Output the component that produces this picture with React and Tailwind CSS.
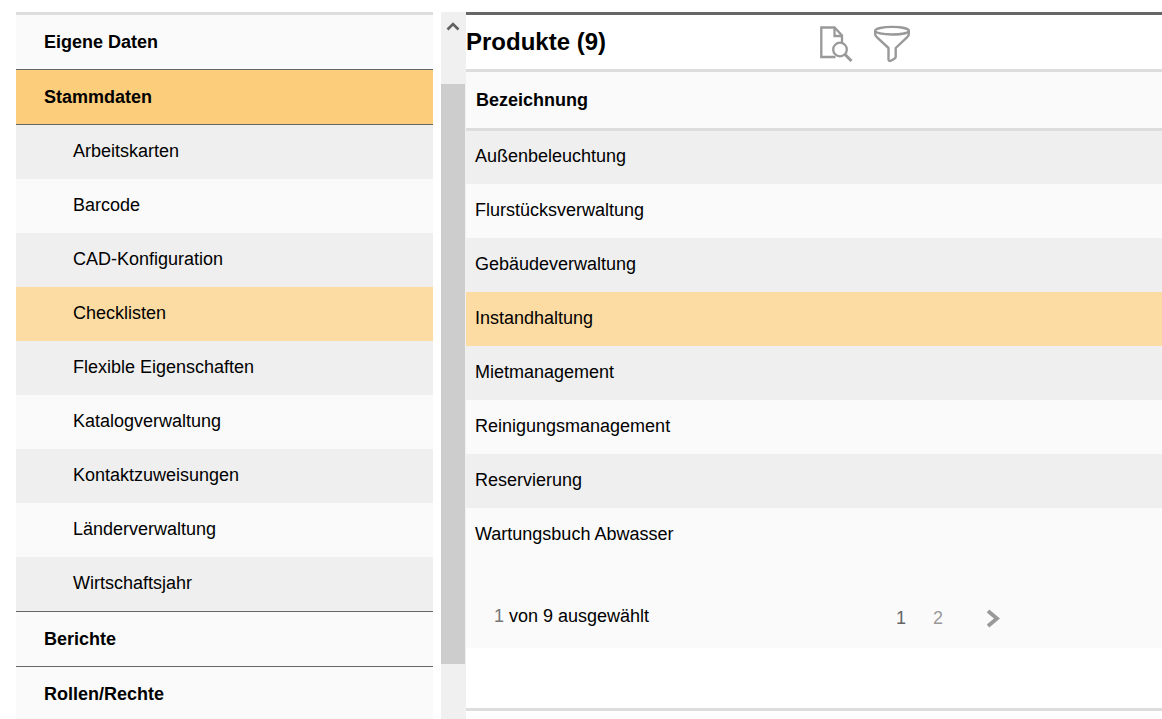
import { useState } from 'react';
import clsx from 'clsx';

const STAMMDATEN = [
  'Arbeitskarten', 'Barcode', 'CAD-Konfiguration', 'Checklisten', 'Flexible Eigenschaften',
  'Katalogverwaltung', 'Kontaktzuweisungen', 'Länderverwaltung', 'Wirtschaftsjahr',
];

const PRODUKTE = [
  'Außenbeleuchtung', 'Flurstücksverwaltung', 'Gebäudeverwaltung', 'Instandhaltung',
  'Mietmanagement', 'Reinigungsmanagement', 'Reservierung', 'Wartungsbuch Abwasser',
];

export default function App() {
  return (
    <div className="h-screen overflow-hidden pt-3 pl-4 flex bg-white text-black text-[18px] leading-6 font-['Liberation_Sans',Arial,sans-serif]">
      <Sidebar />
      <ScrollRail />
      <Products />
    </div>
  );
}

function Sidebar() {
  const [active, setActive] = useState('Checklisten');

  return (
    <nav className="w-[417px] shrink-0 border-t-3 border-[#dddddd]">
      <SectionLink label="Eigene Daten" />
      <SectionLink label="Stammdaten" open />
      <ul>
        {STAMMDATEN.map(item => (
          <li key={item} className={clsx(active === item ? 'bg-[#fddca3]' : 'odd:bg-[#efefef] even:bg-[#fafafa]')}>
            <a href="#" onClick={() => setActive(item)} className="flex items-center h-[54px] pl-[57px] pb-0.5">{item}</a>
          </li>
        ))}
      </ul>
      <div className="border-t border-[#666666]">
        <SectionLink label="Berichte" />
        <SectionLink label="Rollen/Rechte" />
      </div>
    </nav>
  );
}

function SectionLink({ label, open }) {
  return (
    <a href="#" className={clsx('flex items-center h-[55px] pl-7 border-b border-[#666666] font-bold', open ? 'bg-[#fccd7b]' : 'bg-[#fafafa]')}>
      {label}
    </a>
  );
}

function ScrollRail() {
  return (
    <div className="ml-2 w-[25px] shrink-0 bg-[#f0f0f0]">
      <button aria-label="Nach oben" className="w-6 h-[72px] flex justify-center items-start pt-2">
        <svg width="14" height="14" viewBox="0 0 14 14" fill="none" stroke="#606060" strokeWidth="2.6">
          <path d="M1.500 9.500 7 4l5.500 5.500" />
        </svg>
      </button>
      <div className="w-6 h-[580px] bg-[#cdcdcd]" />
    </div>
  );
}

function Products() {
  const [selected, setSelected] = useState('Instandhaltung');

  return (
    <main className="flex-1 min-w-0">
      <section className="border-t-3 border-[#666666]">
        <header className="h-[54px] flex items-center">
          <h1 className="w-[353px] text-2xl font-bold">Produkte (9)</h1>
          <div className="flex gap-5">
            <button aria-label="Vorschau"><PreviewIcon /></button>
            <button aria-label="Filter"><FilterIcon /></button>
          </div>
        </header>

        <table className="w-full border-collapse text-left">
          <thead>
            <tr className="h-[59px] bg-[#fafafa] border-y-3 border-[#dddddd]">
              <th className="py-0 px-2.5 font-bold">Bezeichnung</th>
            </tr>
          </thead>
          <tbody>
            {PRODUKTE.map(name => (
              <tr key={name} onClick={() => setSelected(name)}
                className={clsx('h-[54px]', selected === name ? 'bg-[#fddca3]' : 'odd:bg-[#efefef] even:bg-[#fafafa]')}>
                <td className="pt-0 pb-0.5 px-[9px]">{name}</td>
              </tr>
            ))}
          </tbody>
        </table>

        <footer className="h-[86px] flex items-start pt-[42px] pl-7 bg-[#fafafa]">
          <p className="w-[402px]"><span className="text-[#777777]">1</span> von 9 ausgewählt</p>
          <div className="flex items-center pt-0.5 text-[#999999]">
            <button className="w-[37px] text-left text-[#666666]">1</button>
            <button className="w-[53px] text-left">2</button>
            <button aria-label="Nächste Seite">
              <svg width="16" height="20" viewBox="0 0 16 20" fill="none" stroke="currentColor" strokeWidth="3.8">
                <path d="M2 3l9 7.500L2 18" />
              </svg>
            </button>
          </div>
        </footer>
      </section>
      <div className="mt-[60px] border-t-3 border-[#dddddd]" />
    </main>
  );
}

function PreviewIcon() {
  return (
    <svg width="34" height="40" viewBox="0 0 34 40" fill="none" stroke="#999999" strokeWidth="2.3">
      <path d="M16.500 35H2.300V5.500H15.500l7.500 8v6.500" />
      <path d="M15.500 5.500v8.500H23" />
      <circle cx="21" cy="27.500" r="6.800" />
      <path d="m26 32.500 6.500 6.500" strokeWidth="3" />
    </svg>
  );
}

function FilterIcon() {
  return (
    <svg width="38" height="40" viewBox="0 0 38 40" fill="none" stroke="#999999" strokeWidth="2.4" strokeLinejoin="round">
      <ellipse cx="19" cy="8.700" rx="16.800" ry="3.800" />
      <path d="M2.200 8.700V12c0 1.200.5 2.200 1.600 3.100L15.500 26v11.300c0 1.500 1 2.100 2.300 1.400l3.600-2c.9-.5 1.300-1 1.300-2V26l11.500-10.900c1.100-.9 1.600-1.900 1.600-3.100V8.700" />
    </svg>
  );
}
